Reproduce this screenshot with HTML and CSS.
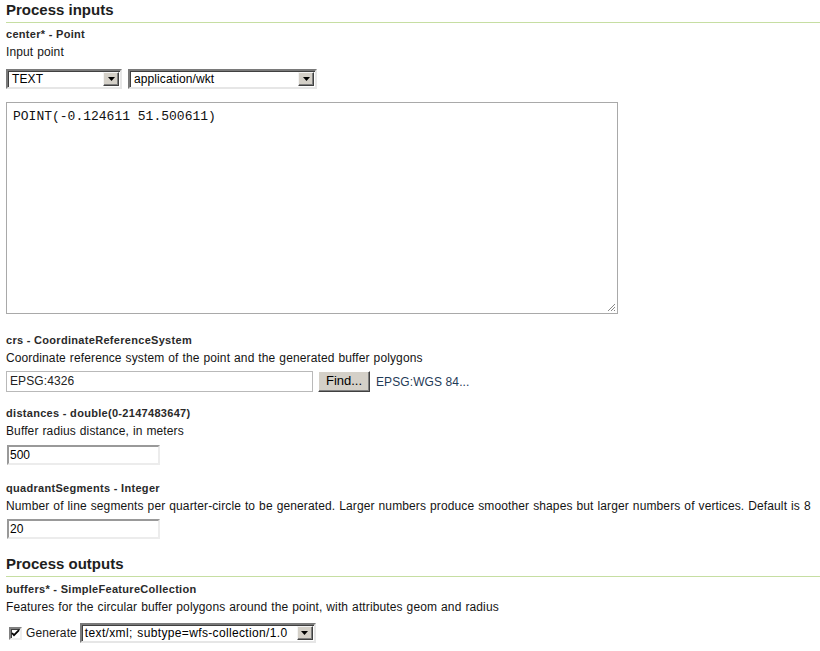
FILE: index.html
```html
<!DOCTYPE html>
<html>
<head>
<meta charset="utf-8">
<link rel="stylesheet" href="styles.css">
</head>
<body>
<h2 class="section">Process inputs</h2>

<div class="field f-first">
  <div class="label">center* - Point</div>
  <div class="desc">Input point</div>
  <div class="row sel-row">
    <div class="select w-type"><span class="sel-text">TEXT</span><span class="arrow"><svg width="7" height="4" viewBox="0 0 7 4"><path d="M0 0h7L3.5 4z" fill="#000"/></svg></span></div>
    <div class="select w-mime"><span class="sel-text">application/wkt</span><span class="arrow"><svg width="7" height="4" viewBox="0 0 7 4"><path d="M0 0h7L3.5 4z" fill="#000"/></svg></span></div>
  </div>
  <div class="textarea">POINT(-0.124611 51.500611)<svg class="grip" width="10" height="10" viewBox="0 0 10 10"><path d="M9 2L2 9M9 5L5 9M9 8L8 9" stroke="#888" stroke-width="1"/></svg></div>
</div>

<div class="field f-crs">
  <div class="label">crs - CoordinateReferenceSystem</div>
  <div class="desc">Coordinate reference system of the point and the generated buffer polygons</div>
  <div class="row crs-row">
    <div class="input-flat">EPSG:4326</div>
    <div class="button">Find...</div>
    <span class="crs-name">EPSG:WGS 84...</span>
  </div>
</div>

<div class="field f-dist">
  <div class="label">distances - double(0-2147483647)</div>
  <div class="desc">Buffer radius distance, in meters</div>
  <div class="input-inset">500</div>
</div>

<div class="field f-quad">
  <div class="label">quadrantSegments - Integer</div>
  <div class="desc">Number of line segments per quarter-circle to be generated. Larger numbers produce smoother shapes but larger numbers of vertices. Default is 8</div>
  <div class="input-inset">20</div>
</div>

<h2 class="section s-out">Process outputs</h2>

<div class="field f-buf">
  <div class="label">buffers* - SimpleFeatureCollection</div>
  <div class="desc">Features for the circular buffer polygons around the point, with attributes geom and radius</div>
  <div class="row gen-row">
    <span class="checkbox"><svg width="9" height="9" viewBox="0 0 9 9"><path d="M1 4l2 2.2L8 1.2" stroke="#000" stroke-width="1.8" fill="none"/></svg></span>
    <span class="gen-label">Generate</span>
    <div class="select w-out"><span class="sel-text out-text">text/xml; subtype=wfs-collection/1.0</span><span class="arrow"><svg width="7" height="4" viewBox="0 0 7 4"><path d="M0 0h7L3.5 4z" fill="#000"/></svg></span></div>
  </div>
</div>
</body>
</html>
```

FILE: styles.css
```css
html, body {
  margin: 0;
  padding: 0;
  background: #fff;
}
body {
  padding: 0 0 0 6px;
  font-family: "Liberation Sans", Arial, sans-serif;
  font-size: 12px;
  color: #141414;
}
.section {
  margin: 0;
  padding: 1px 0 3px 0;
  font-size: 15px;
  line-height: 18px;
  font-weight: bold;
  color: #1e1e1e;
  border-bottom: 1px solid #c6dea2;
}
.s-out {
  margin-top: 15px;
}
.label {
  font-size: 11px;
  font-weight: bold;
  line-height: 18px;
  color: #2a2a2a;
  letter-spacing: 0.3px;
}
.desc {
  line-height: 18px;
  white-space: nowrap;
  letter-spacing: 0.12px;
  word-spacing: 0.5px;
}
.f-first { margin-top: 2px; }
.f-crs { margin-top: 17px; }
.f-dist { margin-top: 12px; }
.f-quad { margin-top: 14px; }
.f-buf { margin-top: 3px; }

.row {
  display: flex;
  align-items: center;
}
.sel-row {
  margin-top: 8px;
  gap: 6px;
}
.select {
  display: flex;
  align-items: stretch;
  height: 20px;
  box-sizing: border-box;
  border-style: solid;
  border-width: 2px;
  border-color: #7a7a7a #e6e6e6 #e6e6e6 #7a7a7a;
  box-shadow: inset 1px 1px 0 #404040;
  background: #fff;
  padding: 1px;
}
.sel-text {
  flex: 1;
  padding-left: 3px;
  line-height: 15px;
  font-size: 12px;
  color: #000;
  white-space: nowrap;
  overflow: hidden;
  letter-spacing: 0.1px;
  word-spacing: 0.5px;
}
.out-text {
  padding-left: 2px;
  letter-spacing: 0.35px;
  word-spacing: 1px;
}
.arrow {
  width: 16px;
  display: flex;
  align-items: center;
  justify-content: center;
  background: #d4d0c8;
  box-sizing: border-box;
  border-style: solid;
  border-width: 1px;
  border-color: #f4f4f4 #404040 #404040 #f4f4f4;
  box-shadow: inset -1px -1px 0 #808080;
}
.w-type { width: 116px; }
.w-mime { width: 189px; }
.w-out { width: 236px; }

.textarea {
  position: relative;
  margin-top: 13px;
  width: 612px;
  height: 212px;
  box-sizing: border-box;
  border: 1px solid #a9a9a9;
  padding: 6px 6px;
  font-family: "Liberation Mono", "Courier New", monospace;
  font-size: 13px;
  line-height: 15px;
  color: #111;
}
.grip {
  position: absolute;
  right: 1px;
  bottom: 1px;
}

.crs-row {
  margin-top: 4px;
}
.input-flat {
  width: 307px;
  height: 21px;
  box-sizing: border-box;
  border: 1px solid #b9b9b9;
  padding-left: 3px;
  line-height: 19px;
  font-size: 12px;
  color: #222;
  letter-spacing: 0.1px;
}
.button {
  margin-left: 5px;
  width: 52px;
  height: 21px;
  box-sizing: border-box;
  background: #d4d0c8;
  border-style: solid;
  border-width: 1px;
  border-color: #fff #404040 #404040 #fff;
  box-shadow: inset -1px -1px 0 #808080;
  text-align: center;
  line-height: 18px;
  font-size: 13px;
  color: #000;
}
.crs-name {
  margin-left: 6px;
  color: #1f3b57;
  letter-spacing: 0.1px;
}

.input-inset {
  margin-top: 5px;
  margin-left: 1px;
  width: 153px;
  height: 20px;
  box-sizing: border-box;
  border-style: solid;
  border-width: 2px;
  border-color: #999 #ececec #ececec #999;
  padding-left: 1px;
  line-height: 16px;
  font-size: 12px;
  color: #000;
}
.f-quad .input-inset {
  margin-top: 4px;
}

.gen-row {
  margin-top: 7px;
}
.checkbox {
  margin-left: 3px;
  width: 13px;
  height: 13px;
  box-sizing: border-box;
  border-style: solid;
  border-width: 2px;
  border-color: #808080 #eee #eee #808080;
  box-shadow: inset 1px 1px 0 #404040;
  background: #fff;
  display: flex;
  align-items: center;
  justify-content: center;
}
.gen-label {
  margin-left: 4px;
  margin-right: 3px;
  font-size: 12px;
  color: #1a1a1a;
  letter-spacing: 0.1px;
}
```
